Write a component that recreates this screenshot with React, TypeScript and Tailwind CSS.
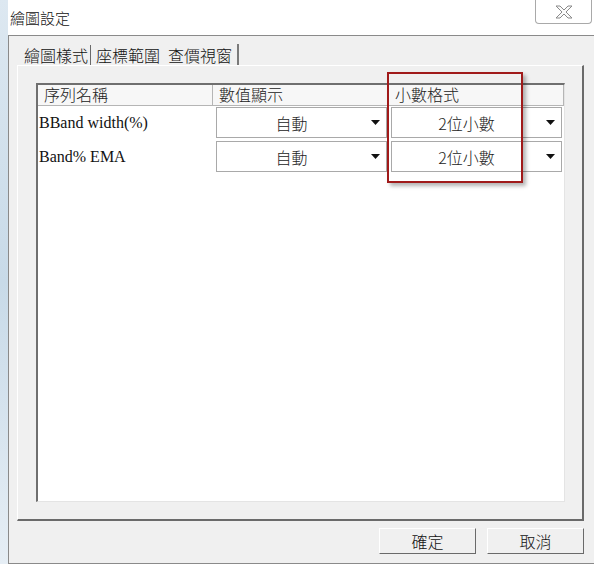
import React from "react";

const cjk = "font-['Noto_Sans_CJK_TC','Noto_Sans',sans-serif] font-light";

type Row = { name: string; display: string; decimals: string };

const rows: Row[] = [
  { name: "BBand width(%)", display: "自動", decimals: "2位小數" },
  { name: "Band% EMA", display: "自動", decimals: "2位小數" },
];

function Arrow() {
  return (
    <svg width="9" height="5" viewBox="0 0 9 5">
      <polygon points="0,0 9,0 4.5,5" fill="#111" />
    </svg>
  );
}

function Combo({ value }: { value: string }) {
  return (
    <div className="flex h-[31px] items-center border border-[#a9a9a9] bg-white">
      <span className="flex-1 text-center text-[16px] text-[#222]">{value}</span>
      <span className="flex w-[20px] justify-center pr-[2px]">
        <Arrow />
      </span>
    </div>
  );
}

function CloseIcon() {
  return (
    <svg width="18" height="14" viewBox="0 0 18 14">
      <polygon
        points="1,1 5,1 9,5 13,1 17,1 11,7 17,13 13,13 9,9 5,13 1,13 7,7"
        fill="#fbfbfb"
        stroke="#8a8a8a"
        strokeWidth="1"
        strokeLinejoin="round"
      />
    </svg>
  );
}

function Button({ label }: { label: string }) {
  return (
    <button className="flex h-[26px] w-[97px] items-center justify-center border border-t-white border-l-white border-r-[#6a6a6a] border-b-[#6a6a6a] bg-[#f0f0f0] text-[16px] text-[#111]">
      {label}
    </button>
  );
}

export default function App() {
  return (
    <div className={`relative flex h-[564px] w-[594px] overflow-hidden bg-white ${cjk}`}>
      {/* glass edge of the window */}
      <div className="h-full w-[8px] bg-gradient-to-b from-[#dde8f1] via-[#c8dae8] to-[#e6eef5]" />

      <div className="flex flex-1 flex-col">
        {/* title bar */}
        <div className="flex h-[35px] items-start justify-between bg-white">
          <span className="pl-[2px] pt-[7px] text-[15px] leading-[22px] text-[#111]">繪圖設定</span>
          <div className="mr-[2px] flex h-[24px] w-[57px] items-center justify-center rounded-b-[4px] border border-t-0 border-[#a9a9a9] bg-white">
            <CloseIcon />
          </div>
        </div>

        {/* dialog body */}
        <div className="flex flex-1 flex-col border-l border-t border-b border-[#8a8a8a] bg-[#f0f0f0] pl-[8px] pr-[10px] pt-[8px]">
          {/* tabs */}
          <div className="flex h-[22px] items-center text-[16px] leading-[20px] text-[#111]">
            <span className="border-r border-[#6a6a6a] pl-[7px] pr-[2px]">繪圖樣式</span>
            <span className="pl-[5px] pr-[2px]">座標範圍</span>
            <span className="flex h-[22px] items-center border-r-2 border-[#7a7a7a] pl-[6px] pr-[5px]">查價視窗</span>
          </div>

          {/* tab panel */}
          <div className="-mt-[1px] flex h-[456px] flex-col border-l border-t border-white border-r-2 border-b-2 border-r-[#6a6a6a] border-b-[#6a6a6a] pl-[18px] pt-[17px]">
            <div className="flex h-[419px] w-[529px] flex-col border-l-2 border-t-2 border-l-[#6f6f6f] border-t-[#6f6f6f] border-r border-b border-r-[#e4e4e4] border-b-[#e4e4e4] bg-white">
              {/* header */}
              <div className="flex h-[21px] text-[16px] leading-[19px] text-[#222]">
                <div className="w-[175px] border-r border-b border-[#b5b5b5] bg-[#f7f7f7] pl-[6px]">序列名稱</div>
                <div className="w-[176px] border-r border-b border-[#b5b5b5] bg-[#f7f7f7] pl-[6px]">數值顯示</div>
                <div className="w-[175px] border-r border-b border-[#b5b5b5] bg-[#f7f7f7] pl-[6px]">小數格式</div>
              </div>

              {rows.map((r) => (
                <div key={r.name} className="flex h-[34px] items-start pt-[1px]">
                  <div className="flex h-[31px] w-[176px] items-center pl-[1px] font-['Liberation_Serif','Noto_Sans_CJK_TC',serif] font-normal text-[16px] text-[#111]">
                    {r.name}
                  </div>
                  <div className="w-[175px] px-[2px]">
                    <Combo value={r.display} />
                  </div>
                  <div className="w-[175px] px-[2px]">
                    <Combo value={r.decimals} />
                  </div>
                </div>
              ))}
            </div>
          </div>

          {/* footer buttons */}
          <div className="flex justify-end gap-[11px] pt-[7px]">
            <Button label="確定" />
            <Button label="取消" />
          </div>
        </div>
      </div>

      {/* red highlight drawn over the grid */}
      <div className="absolute left-[387px] top-[72px] h-[111px] w-[136px] border-2 border-[#a01a1a] shadow-[3px_3px_4px_rgba(0,0,0,0.3)]" />
    </div>
  );
}
